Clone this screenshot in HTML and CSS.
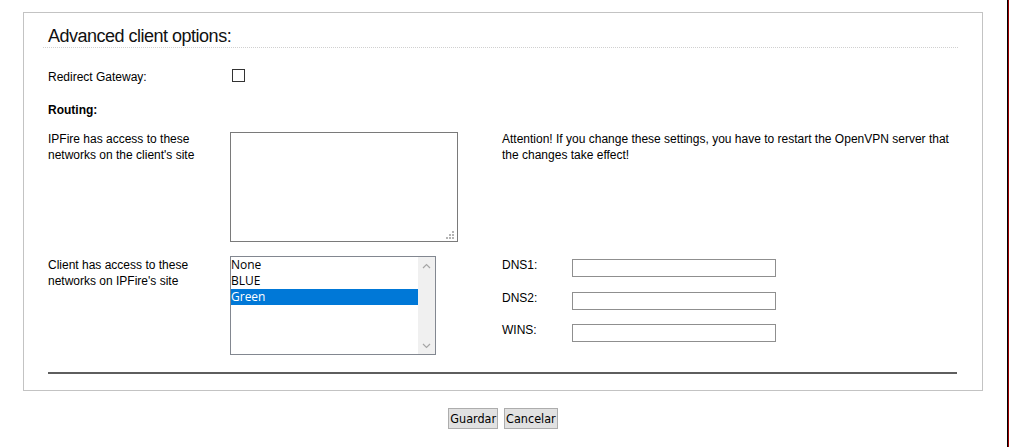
FILE: index.html
```html
<!DOCTYPE html>
<html lang="en">
<head>
<meta charset="utf-8">
<title>Advanced client options</title>
<link rel="stylesheet" href="styles.css">
</head>
<body>
<div class="frame">
  <div class="page">
    <div class="box">
      <h2 class="title">Advanced client options:</h2>
      <div class="content">
        <div class="redirect">
          <span class="label">Redirect Gateway:</span>
          <input type="checkbox" class="check">
        </div>
        <div class="routing">Routing:</div>
        <div class="grid">
          <div class="label">IPFire has access to these networks on the client's site</div>
          <div class="cell">
            <div class="areawrap">
              <textarea class="area"></textarea>
              <svg class="grip" width="8" height="8" viewBox="0 0 8 8">
                <rect x="6" y="0" width="2" height="2" fill="#b4b4b4"/>
                <rect x="3" y="3" width="2" height="2" fill="#b4b4b4"/>
                <rect x="6" y="3" width="2" height="2" fill="#b4b4b4"/>
                <rect x="0" y="6" width="2" height="2" fill="#b4b4b4"/>
                <rect x="3" y="6" width="2" height="2" fill="#b4b4b4"/>
                <rect x="6" y="6" width="2" height="2" fill="#b4b4b4"/>
              </svg>
            </div>
          </div>
          <div class="note">Attention! If you change these settings, you have to restart the OpenVPN server that the changes take effect!</div>
          <div class="label">Client has access to these networks on IPFire's site</div>
          <div class="cell">
            <div class="listbox">
              <div class="options">
                <div class="opt">None</div>
                <div class="opt">BLUE</div>
                <div class="opt selected">Green</div>
              </div>
              <div class="scroll">
                <svg class="chev" width="9" height="6" viewBox="0 0 9 6"><path d="M1 5 L4.5 1.5 L8 5" fill="none" stroke="#a6a6a6" stroke-width="1.2"/></svg>
                <svg class="chev" width="9" height="6" viewBox="0 0 9 6"><path d="M1 1 L4.5 4.5 L8 1" fill="none" stroke="#a6a6a6" stroke-width="1.2"/></svg>
              </div>
            </div>
          </div>
          <div class="dns">
            <span class="dlabel">DNS1:</span><input type="text" class="field">
            <span class="dlabel">DNS2:</span><input type="text" class="field">
            <span class="dlabel">WINS:</span><input type="text" class="field">
          </div>
        </div>
        <hr class="rule">
      </div>
    </div>
    <div class="actions">
      <button class="btn">Guardar</button><button class="btn">Cancelar</button>
    </div>
  </div>
</div>
</body>
</html>
```
FILE: styles.css
```css
html, body {
  margin: 0;
  padding: 0;
  background: #fff;
}

body {
  font-family: "Liberation Sans", Arial, sans-serif;
  font-size: 12px;
  color: #000;
}

.frame {
  width: 1009px;
  min-height: 447px;
  box-sizing: border-box;
  border-right: 1px solid #9a0000;
}

.page {
  min-height: 447px;
  box-sizing: border-box;
  border-right: 1px solid #000;
  padding: 12px 0 0 23px;
}

.box {
  width: 960px;
  box-sizing: border-box;
  border: 1px solid #c3c3c3;
  padding: 12px 24px 0 19px;
}

.title {
  margin: 0;
  padding-left: 5px;
  font-size: 18px;
  line-height: 22px;
  font-weight: normal;
  letter-spacing: -0.5px;
  color: #111;
  border-bottom: 1px dotted #d0d0d0;
}

.content {
  padding: 0 1px 0 5px;
}

.label {
  line-height: 16px;
  padding-top: 1px;
}

.redirect {
  margin-top: 20px;
  display: grid;
  grid-template-columns: 182px auto;
  justify-content: start;
  height: 17px;
}

.check {
  appearance: none;
  -webkit-appearance: none;
  width: 13px;
  height: 13px;
  margin: 1px 0 0 2px;
  box-sizing: border-box;
  border: 1px solid #333;
  background: #fff;
}

.routing {
  margin-top: 17px;
  font-weight: bold;
  line-height: 16px;
}

.grid {
  margin-top: 12px;
  display: grid;
  grid-template-columns: 182px 272px 1fr;
  align-items: start;
}

.areawrap {
  position: relative;
  width: 228px;
  margin: 2px 0 14px;
}

.area {
  display: block;
  width: 228px;
  height: 110px;
  box-sizing: border-box;
  border: 1px solid #7a7a7a;
  padding: 2px;
  font: inherit;
  resize: none;
  outline: none;
}

.grip {
  position: absolute;
  right: 4px;
  bottom: 3px;
}

.note {
  line-height: 16px;
  padding-top: 1px;
}

.listbox {
  width: 206px;
  height: 99px;
  box-sizing: border-box;
  border: 1px solid #828790;
  display: flex;
  background: #fff;
}

.options {
  flex: 1;
  font-family: "Open Sans", "Noto Sans", sans-serif;
  font-size: 12px;
}

.opt {
  height: 16px;
  line-height: 16px;
}

.opt.selected {
  background: #0078d7;
  color: #fff;
}

.scroll {
  width: 17px;
  background: #f0f0f0;
  display: flex;
  flex-direction: column;
  justify-content: space-between;
  align-items: center;
  padding: 6px 0 5px;
}

.chev {
  display: block;
}

.dns {
  display: grid;
  grid-template-columns: 70px 204px;
  grid-template-rows: 33px 32px 32px;
  align-items: start;
}

.dlabel {
  line-height: 16px;
  padding-top: 1px;
}

.field {
  display: block;
  margin: 3px 0 0;
  width: 204px;
  height: 18px;
  box-sizing: border-box;
  border: 1px solid #8f8f8f;
  padding: 0 2px;
  font: inherit;
}

.rule {
  margin: 17px 0 16px;
  height: 2px;
  border: 0;
  background: #5e5e5e;
}

.actions {
  width: 960px;
  margin-top: 17px;
  text-align: center;
  font-size: 0;
}

.btn {
  height: 21px;
  margin: 0 3px;
  padding: 0 1px;
  border: 1px solid #adadad;
  background: #e1e1e1;
  font-family: "DejaVu Sans Condensed", "Liberation Sans Narrow", sans-serif;
  font-stretch: condensed;
  font-size: 12.5px;
  color: #000;
  vertical-align: top;
}
```
